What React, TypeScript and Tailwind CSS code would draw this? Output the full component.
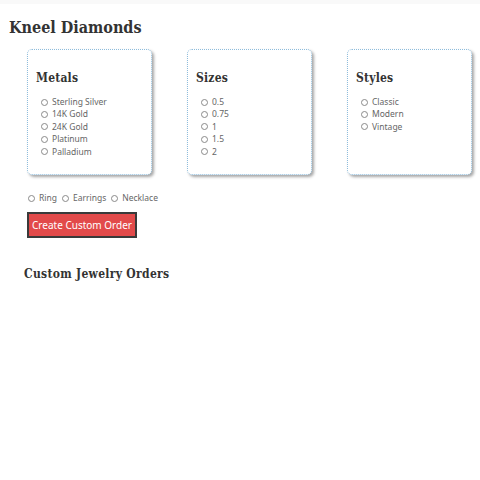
import React from "react";

const slab = { fontFamily: '"DejaVu Serif Condensed", "DejaVu Serif", "Liberation Serif", serif', fontStretch: "condensed" as const };
const body = { fontFamily: '"Noto Sans", "Liberation Sans", sans-serif' };

function Radio({ label }: { label: string }) {
  return (
    <label className="flex items-center gap-[4px] h-[12.4px] leading-none">
      <span className="block w-[7px] h-[7px] rounded-full border border-[#8a8a8a] bg-white" />
      <span>{label}</span>
    </label>
  );
}

function Card({ title, items }: { title: string; items: string[] }) {
  return (
    <div className="w-[125px] h-[126px] rounded-[5px] border border-dotted border-[#8dbcdc] bg-white shadow-[2px_2px_3px_rgba(0,0,0,0.35)] pl-[8px] pt-[22px]">
      <h2 style={slab} className="text-[12px] font-bold text-[#333] leading-none tracking-[0.2px]">
        {title}
      </h2>
      <div style={body} className="mt-[12px] pl-[5px] text-[8.5px] text-[#666] flex flex-col">
        {items.map((i) => (
          <Radio key={i} label={i} />
        ))}
      </div>
    </div>
  );
}

export default function App() {
  return (
    <div className="w-[480px] h-[480px] bg-white relative">
      <div className="h-[4px] bg-[#f9f9f9]" />
      <h1 style={slab} className="ml-[9px] mt-[16px] text-[16px] font-bold text-[#333] leading-none">
        Kneel Diamonds
      </h1>
      <div className="flex gap-[35px] pl-[27px] mt-[13px]">
        <Card title="Metals" items={["Sterling Silver", "14K Gold", "24K Gold", "Platinum", "Palladium"]} />
        <Card title="Sizes" items={["0.5", "0.75", "1", "1.5", "2"]} />
        <Card title="Styles" items={["Classic", "Modern", "Vintage"]} />
      </div>
      <div style={body} className="flex items-center gap-[5px] pl-[28px] mt-[17px] text-[8.5px] text-[#666]">
        <Radio label="Ring" />
        <Radio label="Earrings" />
        <Radio label="Necklace" />
      </div>
      <button
        style={body}
        className="ml-[27px] mt-[8px] w-[110px] h-[26px] bg-[#e24a4a] border-2 border-[#3a3a3a] text-white text-[10px] leading-none flex items-center justify-center"
      >
        Create Custom Order
      </button>
      <h2 style={slab} className="ml-[24px] mt-[30px] text-[12px] font-bold text-[#333] leading-none tracking-[0.3px]">
        Custom Jewelry Orders
      </h2>
    </div>
  );
}
